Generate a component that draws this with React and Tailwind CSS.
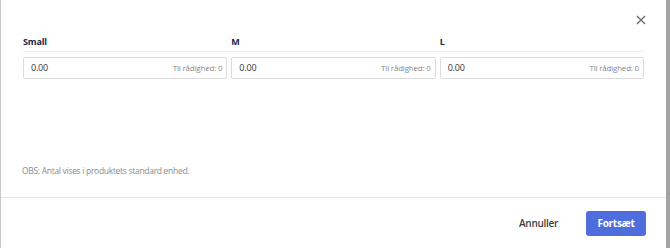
import React from "react";

const sizes = ["Small", "M", "L"];

const App = () => {
  return (
    <div
      className="w-[670px] h-[248px] flex bg-[#a3a3a3] overflow-hidden"
      style={{ fontFamily: '"Open Sans", "Liberation Sans", sans-serif' }}
    >
      <div className="w-[666px] h-full bg-white border-l border-[#c9c9c9] flex flex-col">
        <div className="h-[36px] flex items-start justify-end pr-[19px] pt-[14px]">
          <button className="w-[12px] h-[12px] flex items-center justify-center text-[#6b6b6b]">
            <svg width="10" height="10" viewBox="0 0 10 10" fill="none" stroke="currentColor" strokeWidth="1.3">
              <path d="M1 1L9 9M9 1L1 9" />
            </svg>
          </button>
        </div>

        <div className="px-[22px]">
          <div className="grid grid-cols-3 gap-[4px] h-[16px] border-b border-[#ececec]">
            {sizes.map((s) => (
              <div key={s} className="text-[9px] leading-[12px] font-bold text-[#1c2442] tracking-[-0.2px]">
                {s}
              </div>
            ))}
          </div>

          <div className="grid grid-cols-3 gap-[4px] mt-[5px]">
            {sizes.map((s) => (
              <div
                key={s}
                className="h-[22px] border border-[#dcdcdc] rounded-[2px] flex items-center justify-between pl-[7px] pr-[4px]"
              >
                <span className="text-[9px] text-[#333] tracking-[-0.2px]">0.00</span>
                <span className="text-[8px] text-[#8a8a8a] tracking-[-0.2px]">Til rådighed: 0</span>
              </div>
            ))}
          </div>
        </div>

        <div className="flex-1 flex items-end px-[21px] pb-[19px]">
          <p className="text-[8.5px] text-[#8c8c8c] tracking-[-0.3px]">
            OBS: Antal vises i produktets standard enhed.
          </p>
        </div>

        <div className="h-[51px] border-t border-[#e6e6e6] flex items-center justify-end gap-[16px] pr-[20px] pt-[1px]">
          <button className="px-[12px] text-[10px] font-semibold text-[#3d3d3d] tracking-[-0.3px]">
            Annuller
          </button>
          <button className="w-[60px] h-[25px] rounded-[3px] bg-[#4f6ddc] text-white text-[10px] font-bold tracking-[-0.3px]">
            Fortsæt
          </button>
        </div>
      </div>
    </div>
  );
};

export default App;
